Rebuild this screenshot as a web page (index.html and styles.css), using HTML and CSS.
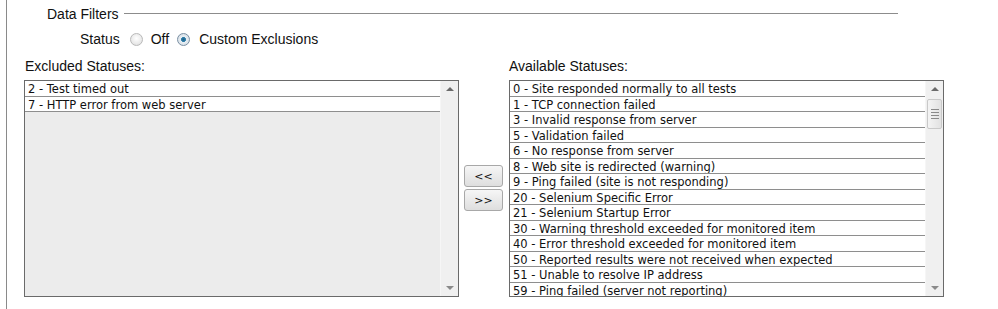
FILE: index.html
```html
<!DOCTYPE html>
<html lang="en">
<head>
    <meta charset="UTF-8">
    <title>Data Filters</title>
    <link rel="stylesheet" href="styles.css">
</head>
<body>
    <div class="panel">
        <div class="legend">
            <span class="legend-text">Data Filters</span>
            <span class="legend-line"></span>
        </div>

        <div class="status-row">
            <span>Status</span>
            <span class="radio first"></span>
            <span>Off</span>
            <span class="radio checked"></span>
            <span>Custom Exclusions</span>
        </div>

        <div class="labels">
            <div class="label">Excluded Statuses:</div>
            <div class="label">Available Statuses:</div>
        </div>

        <div class="lists">
            <!-- Excluded -->
            <div class="listbox grey">
                <div class="items">
                    <div class="item">2 - Test timed out</div>
                    <div class="item">7 - HTTP error from web server</div>
                </div>
                <div class="scrollbar">
                    <span class="arrow up"></span>
                    <span class="track"></span>
                    <span class="arrow down"></span>
                </div>
            </div>

            <div class="movers">
                <button class="btn">&lt;&lt;</button>
                <button class="btn">&gt;&gt;</button>
            </div>

            <!-- Available -->
            <div class="listbox">
                <div class="items">
                    <div class="item">0 - Site responded normally to all tests</div>
                    <div class="item">1 - TCP connection failed</div>
                    <div class="item">3 - Invalid response from server</div>
                    <div class="item">5 - Validation failed</div>
                    <div class="item">6 - No response from server</div>
                    <div class="item">8 - Web site is redirected (warning)</div>
                    <div class="item">9 - Ping failed (site is not responding)</div>
                    <div class="item">20 - Selenium Specific Error</div>
                    <div class="item">21 - Selenium Startup Error</div>
                    <div class="item">30 - Warning threshold exceeded for monitored item</div>
                    <div class="item">40 - Error threshold exceeded for monitored item</div>
                    <div class="item">50 - Reported results were not received when expected</div>
                    <div class="item">51 - Unable to resolve IP address</div>
                    <div class="item">59 - Ping failed (server not reporting)</div>
                </div>
                <div class="scrollbar">
                    <span class="arrow up"></span>
                    <span class="thumb"><i></i><i></i><i></i><i></i></span>
                    <span class="track"></span>
                    <span class="arrow down"></span>
                </div>
            </div>
        </div>
    </div>
</body>
</html>
```

FILE: styles.css
```css
body {
    margin: 0;
    padding-left: 6px;
    background: #fff;
    font-family: "Liberation Sans", Arial, sans-serif;
    font-size: 14px;
    color: #111;
}
.panel {
    height: 309px;
    border-left: 1px solid #8a8a8a;
}
.legend {
    display: flex;
    align-items: center;
    width: 851px;
    height: 28px;
    padding-left: 40px;
}
.legend-line {
    flex: 1;
    height: 1px;
    margin-left: 5px;
    margin-top: -1px;
    background: #8c8c8c;
}
.status-row {
    display: flex;
    align-items: center;
    height: 22px;
    padding-left: 73px;
}
.radio {
    width: 11px;
    height: 11px;
    margin: 0 9px 0 8px;
    border-radius: 50%;
    border: 1px solid #b9b9b9;
    background: radial-gradient(circle at 50% 40%, #fff 0, #e6e6e6 70%, #d4d4d4 100%);
}
.radio.first {
    margin: 0 8px 0 10px;
}
.radio.checked {
    border-color: #7a8fa3;
    background: radial-gradient(circle, #1e5f86 0, #2f7eaa 28%, #e8eef3 36%, #cfd8e0 100%);
}
.labels {
    display: flex;
    padding: 8px 0 0 18px;
    height: 22px;
    line-height: 16px;
}
.label {
    width: 484px;
}
.lists {
    display: flex;
    margin-left: 17px;
}
.listbox {
    display: flex;
    width: 433px;
    height: 215px;
    border: 1px solid #6a6a6a;
    background: #fff;
    overflow: hidden;
}
.listbox.grey {
    background: #ececec;
}
.items {
    flex: 1;
    font-family: "DejaVu Sans", Verdana, sans-serif;
    font-size: 11.5px;
    color: #111;
}
.item {
    height: 14.5px;
    line-height: 17px;
    padding-left: 3px;
    background: #fff;
    border-bottom: 1px solid #8e8e8e;
    white-space: nowrap;
    overflow: hidden;
}
.scrollbar {
    display: flex;
    flex-direction: column;
    width: 17px;
    background: #f0f0f0;
    border-left: 1px solid #f6f6f6;
}
.scrollbar .track {
    flex: 1;
}
.arrow {
    position: relative;
    height: 17px;
}
.arrow::after {
    content: "";
    position: absolute;
    left: 5px;
    border-left: 4px solid transparent;
    border-right: 4px solid transparent;
}
.arrow.up::after {
    top: 6px;
    border-bottom: 4px solid #6a6a6a;
}
.arrow.down::after {
    top: 7px;
    border-top: 4px solid #8a8a8a;
}
.thumb {
    display: flex;
    flex-direction: column;
    align-items: center;
    justify-content: center;
    gap: 2px;
    height: 28px;
    margin: 1px 1px 0 1px;
    border: 1px solid #c9c9c9;
    border-radius: 2px;
    background: linear-gradient(to right, #f4f4f4, #e2e2e2);
}
.thumb i {
    width: 8px;
    height: 1px;
    background: #8a8a8a;
}
.movers {
    display: flex;
    flex-direction: column;
    gap: 2px;
    width: 50px;
    padding: 85px 0 0 5px;
    box-sizing: border-box;
}
.btn {
    width: 39px;
    height: 22px;
    padding: 0;
    border: 1px solid #a8a8a8;
    border-radius: 3px;
    background: linear-gradient(#f6f6f6, #dedede);
    font-family: "DejaVu Sans", Verdana, sans-serif;
    font-size: 11px;
    color: #111;
}
```
